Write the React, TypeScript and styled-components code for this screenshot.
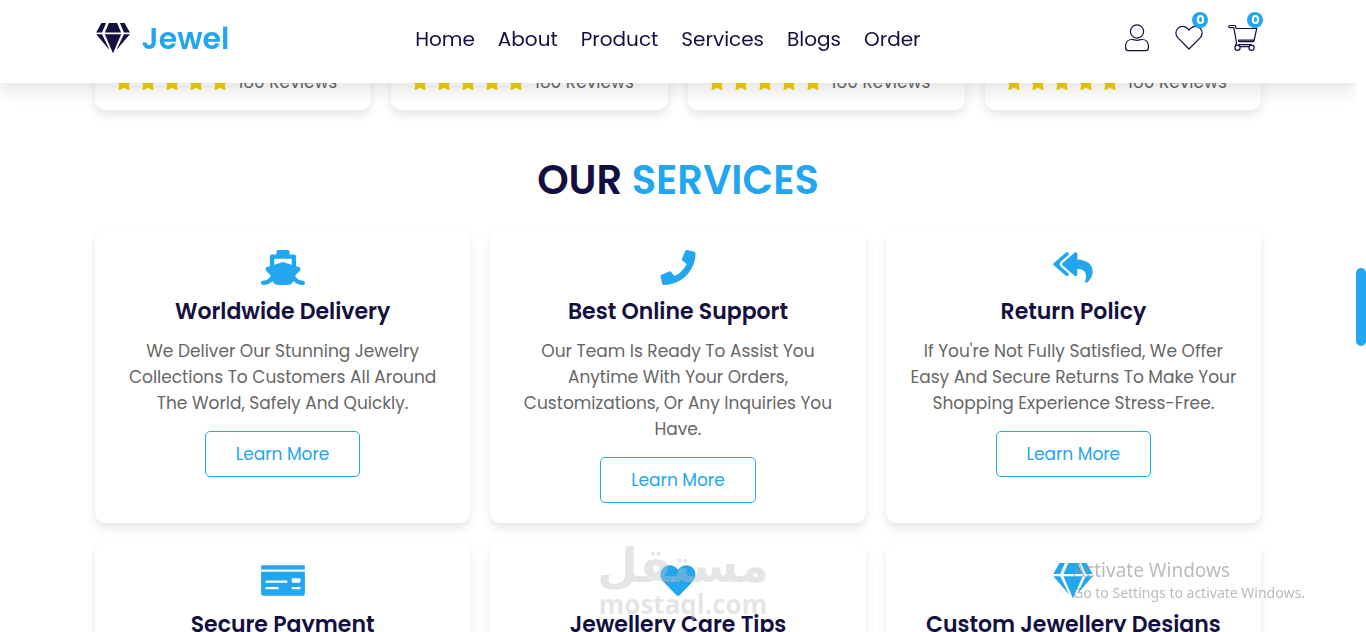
import React from "react";
import styled, { createGlobalStyle } from "styled-components";
import {
  FaGem,
  FaHeart,
  FaMoneyCheck,
  FaPhone,
  FaReplyAll,
  FaShip,
  FaStar,
} from "react-icons/fa";

const blue = "#22a6f0";
const navy = "#130f40";

const GlobalStyle = createGlobalStyle`
  * { box-sizing: border-box; margin: 0; padding: 0; }
  body { font-family: Poppins, Inter, "Liberation Sans", sans-serif; background: #fff; overflow: hidden; }
`;

const Page = styled.div`
  height: 100vh;
  overflow: hidden;
  padding-right: 10px;
`;

const Header = styled.header`
  position: fixed;
  top: 0;
  left: 0;
  right: 10px;
  z-index: 10;
  height: 83px;
  padding: 0 7%;
  display: flex;
  align-items: center;
  justify-content: space-between;
  background: #fff;
  box-shadow: 0 8px 16px rgba(0, 0, 0, 0.1);
`;

const Logo = styled.a`
  display: flex;
  align-items: center;
  gap: 12px;
  padding-bottom: 7px;
  font-size: 30px;
  line-height: 45px;
  font-weight: 600;
  color: ${blue};
  text-decoration: none;
  svg { width: 34px; height: 30px; color: ${navy}; }
`;

const Nav = styled.nav`
  display: flex;
  gap: 23px;
  padding-bottom: 5px;
`;

const NavLink = styled.a`
  font-size: 20px;
  line-height: 30px;
  color: ${navy};
  text-decoration: none;
`;

const Tools = styled.div`
  display: flex;
  align-items: center;
  gap: 25px;
  padding: 0 2px 7px 18px;
`;

const Tool = styled.button`
  position: relative;
  display: flex;
  border: 0;
  background: none;
  color: ${navy};
  font-family: inherit;
`;

const Badge = styled.span`
  position: absolute;
  top: -12px;
  right: -5px;
  width: 16px;
  height: 16px;
  border-radius: 50%;
  background: ${blue};
  color: #fff;
  font-size: 13px;
  line-height: 16px;
  font-weight: 700;
  text-align: center;
`;

const Products = styled.section`
  display: grid;
  grid-template-columns: repeat(4, 1fr);
  gap: 20px;
  padding: 0 7% 20px;
`;

const Card = styled.article`
  padding: 20px;
  border-radius: 10px;
  background: #fff;
  box-shadow: 0 5px 10px rgba(0, 0, 0, 0.1);
`;

const ProductCard = styled(Card)`
  padding: 69px 20px 15px;
`;

const Rating = styled.div`
  display: flex;
  align-items: center;
  gap: 6px;
  height: 26px;
  color: #f4cd06;
  svg { width: 18px; height: 16px; }
`;

const Reviews = styled.span`
  margin-left: 3px;
  font-size: 17px;
  line-height: 26px;
  color: #666;
`;

const Services = styled.section`
  padding: 20px 7%;
`;

const Heading = styled.h1`
  margin-bottom: 20px;
  font-size: 40px;
  line-height: 60px;
  font-weight: 600;
  text-align: center;
  text-transform: uppercase;
  color: ${navy};
  span { color: ${blue}; }
`;

const ServiceGrid = styled.div`
  display: grid;
  grid-template-columns: repeat(3, 1fr);
  gap: 20px;
`;

const ServiceCard = styled(Card)`
  text-align: center;
  > svg {
    display: block;
    width: 44px;
    height: 35px;
    margin: 0 auto 10px;
    color: ${blue};
  }
`;

const Title = styled.h3`
  font-size: 22px;
  line-height: 33px;
  font-weight: 600;
  color: ${navy};
`;

const Text = styled.p`
  padding: 10px 0 15px;
  font-size: 17px;
  line-height: 26px;
  color: #666;
`;

const Button = styled.a`
  display: inline-block;
  padding: 9px 30px;
  border: 1px solid ${blue};
  border-radius: 5px;
  font-size: 17px;
  line-height: 26px;
  color: ${blue};
  text-decoration: none;
  vertical-align: top;
`;

const ScrollTrack = styled.div`
  position: fixed;
  top: 0;
  right: 0;
  bottom: 0;
  z-index: 11;
  width: 10px;
  padding-top: 268px;
  background: #fff;
`;

const ScrollThumb = styled.div`
  height: 78px;
  border-radius: 5px;
  background: ${blue};
`;

const Watermark = styled.div`
  position: fixed;
  bottom: 15px;
  left: 50%;
  z-index: 12;
  transform: translateX(-50%);
  display: flex;
  flex-direction: column;
  align-items: center;
  color: rgba(192, 192, 192, 0.41);
  font-weight: 700;
  pointer-events: none;
`;

const WatermarkArabic = styled.span`
  font-family: "DejaVu Sans", sans-serif;
  font-size: 47px;
  line-height: 50px;
`;

const WatermarkLatin = styled.span`
  font-family: "Open Sans", sans-serif;
  font-size: 26px;
  line-height: 26px;
`;

const Activation = styled.aside`
  position: fixed;
  right: 57px;
  bottom: 29px;
  z-index: 12;
  width: 236px;
  font-family: "Noto Sans", sans-serif;
  color: rgba(150, 150, 150, 0.65);
  white-space: nowrap;
  pointer-events: none;
`;

const ActivationTitle = styled.p`
  font-size: 19px;
  line-height: 26px;
`;

const ActivationText = styled.p`
  font-size: 14px;
  line-height: 20px;
`;

const UserIcon = () => (
  <svg width="26" height="28" viewBox="0 0 26 28" fill="none" stroke="currentColor" strokeWidth="1.2">
    <circle cx="13" cy="7.5" r="6.6" />
    <path d="M8 15.500C4.200 15.500 1.600 18 1.600 22v2c0 1.700 1 2.700 2.700 2.700h17.400c1.700 0 2.700-1 2.700-2.700v-2c0-4-2.600-6.500-6.400-6.500-1.800 0-3 .8-5 .8s-3.200-.8-5-.8Z" />
  </svg>
);

const HeartIcon = () => (
  <svg width="28" height="28" viewBox="0 0 28 28" fill="none" stroke="currentColor" strokeWidth="1.2" strokeLinejoin="round">
    <path d="M14 25 2.900 13.900C.2 11.100.2 6.900 2.800 4.300c2.700-2.700 7-2.700 9.600 0L14 6l1.600-1.700c2.600-2.700 6.900-2.700 9.600 0 2.600 2.600 2.600 6.800-.1 9.600L14 25Z" />
  </svg>
);

const CartIcon = () => (
  <svg width="30" height="28" viewBox="0 0 30 28" fill="none" stroke="currentColor" strokeWidth="1.2" strokeLinejoin="round">
    <path d="M1.600 1.500h5c.6 0 .9.300 1 .8l.6 2.200h20.500l-2.600 12c-.2.800-.6 1.100-1.300 1.100H10.600v-1.500h15M1.600 1.500c-1.200 0-1.200 2.100 0 2.100h4.200l2.700 15.100c.1.800-.7 1.300-1 2.500M11.800 22.600h9.400M10.200 20.700h13.500" />
    <circle cx="9.500" cy="23.800" r="2.600" />
    <circle cx="23.600" cy="23.800" r="2.600" />
  </svg>
);

const links = ["Home", "About", "Product", "Services", "Blogs", "Order"];

const services = [
  {
    icon: FaShip,
    title: "Worldwide Delivery",
    text: "We Deliver Our Stunning Jewelry Collections To Customers All Around The World, Safely And Quickly.",
  },
  {
    icon: FaPhone,
    title: "Best Online Support",
    text: "Our Team Is Ready To Assist You Anytime With Your Orders, Customizations, Or Any Inquiries You Have.",
  },
  {
    icon: FaReplyAll,
    title: "Return Policy",
    text: "If You're Not Fully Satisfied, We Offer Easy And Secure Returns To Make Your Shopping Experience Stress-Free.",
  },
  { icon: FaMoneyCheck, title: "Secure Payment" },
  { icon: FaHeart, title: "Jewellery Care Tips" },
  { icon: FaGem, title: "Custom Jewellery Designs" },
];

export default function App() {
  return (
    <>
      <GlobalStyle />
      <Page>
        <Header>
          <Logo href="#home"><FaGem />Jewel</Logo>
          <Nav>
            {links.map((link) => (
              <NavLink key={link} href={`#${link.toLowerCase()}`}>{link}</NavLink>
            ))}
          </Nav>
          <Tools>
            <Tool aria-label="Account"><UserIcon /></Tool>
            <Tool aria-label="Wishlist"><HeartIcon /><Badge>0</Badge></Tool>
            <Tool aria-label="Cart"><CartIcon /><Badge>0</Badge></Tool>
          </Tools>
        </Header>
        <main>
          <Products>
            {[1, 2, 3, 4].map((product) => (
              <ProductCard key={product}>
                <Rating>
                  {[1, 2, 3, 4, 5].map((star) => <FaStar key={star} />)}
                  <Reviews>180 Reviews</Reviews>
                </Rating>
              </ProductCard>
            ))}
          </Products>
          <Services>
            <Heading>Our <span>Services</span></Heading>
            <ServiceGrid>
              {services.map(({ icon: Icon, title, text }) => (
                <ServiceCard key={title}>
                  <Icon />
                  <Title>{title}</Title>
                  {text && <Text>{text}</Text>}
                  {text && <Button href="#services">Learn More</Button>}
                </ServiceCard>
              ))}
            </ServiceGrid>
          </Services>
        </main>
      </Page>
      <ScrollTrack><ScrollThumb /></ScrollTrack>
      <Watermark>
        <WatermarkArabic lang="ar">مستقل</WatermarkArabic>
        <WatermarkLatin>mostaql.com</WatermarkLatin>
      </Watermark>
      <Activation>
        <ActivationTitle>Activate Windows</ActivationTitle>
        <ActivationText>Go to Settings to activate Windows.</ActivationText>
      </Activation>
    </>
  );
}
